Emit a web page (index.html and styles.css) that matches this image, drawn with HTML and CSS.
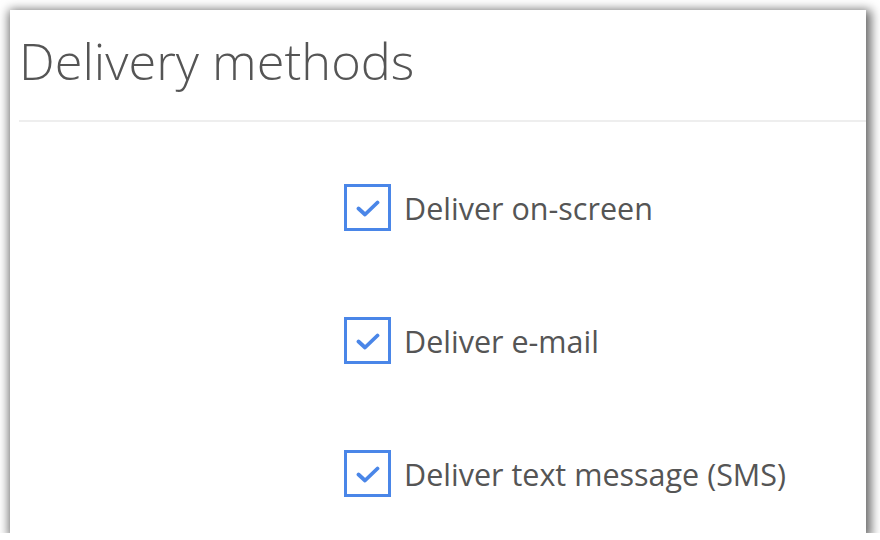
FILE: index.html
```html
<!DOCTYPE html>
<html lang="en">
<head>
  <meta charset="UTF-8" />
  <title>Delivery methods</title>
  <link rel="stylesheet" href="styles.css">
</head>
<body>

<!-- Panel -->
<div class="panel">
  <h1 class="panel-title">Delivery methods</h1>

  <div class="method-list">
    <label class="method">
      <span class="check-box">
        <svg viewBox="0 0 24 24" width="24" height="24"><path d="M2.5 12.5l6.5 6L21.5 6.5" fill="none" stroke="#4a86e8" stroke-width="3.8" stroke-linecap="round" stroke-linejoin="round"/></svg>
      </span>
      <span class="method-label">Deliver on-screen</span>
    </label>
    <label class="method">
      <span class="check-box">
        <svg viewBox="0 0 24 24" width="24" height="24"><path d="M2.5 12.5l6.5 6L21.5 6.5" fill="none" stroke="#4a86e8" stroke-width="3.8" stroke-linecap="round" stroke-linejoin="round"/></svg>
      </span>
      <span class="method-label">Deliver e-mail</span>
    </label>
    <label class="method">
      <span class="check-box">
        <svg viewBox="0 0 24 24" width="24" height="24"><path d="M2.5 12.5l6.5 6L21.5 6.5" fill="none" stroke="#4a86e8" stroke-width="3.8" stroke-linecap="round" stroke-linejoin="round"/></svg>
      </span>
      <span class="method-label">Deliver text message (SMS)</span>
    </label>
  </div>
</div>

</body>
</html>
```

FILE: styles.css
```css
body {
  font-family: "Open Sans", Arial, sans-serif;
  margin: 0;
  background-color: #ffffff;
  color: #555;
}

.panel {
  margin: 10px 0 0 10px;
  width: 856px;
  height: 523px;
  background-color: #fff;
  box-shadow: 2px 3px 10px 3px rgba(0, 0, 0, 0.6);
  overflow: hidden;
}

.panel-title {
  margin: 0 0 0 9px;
  padding: 15px 0 23px 0;
  font-size: 50.5px;
  font-weight: 300;
  line-height: 72px;
  color: #555;
  border-bottom: 2px solid #eeeeee;
}

.method-list {
  display: flex;
  flex-direction: column;
  gap: 86px;
  padding: 62px 0 0 334px;
}

.method {
  display: flex;
  align-items: center;
  gap: 13px;
  height: 47px;
}

.check-box {
  width: 41px;
  height: 41px;
  border: 3px solid #4a86e8;
  display: flex;
  align-items: center;
  justify-content: center;
}

.method-label {
  font-size: 30.5px;
  color: #555;
}
```
